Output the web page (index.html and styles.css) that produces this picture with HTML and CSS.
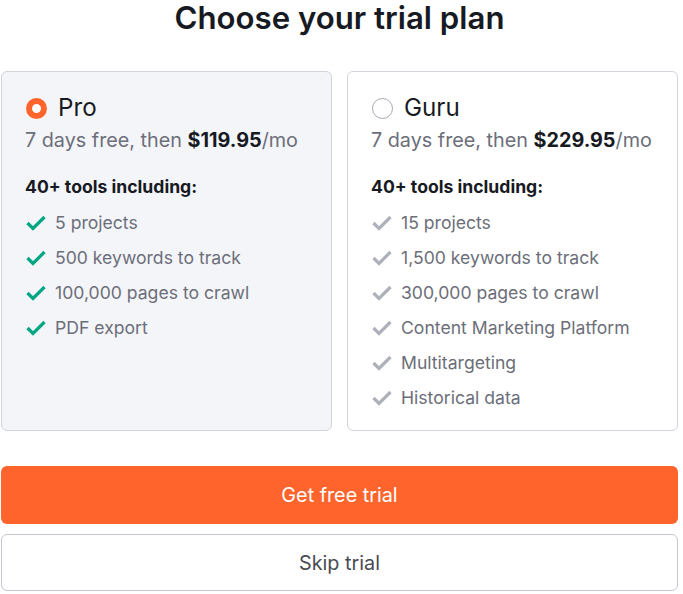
FILE: index.html
```html
<!DOCTYPE html>
<html>
<head>
<meta charset="utf-8">
<link rel="stylesheet" href="styles.css">
</head>
<body>
<div class="page">
  <h1 class="title">Choose your trial plan</h1>
  <div class="plans">
    <div class="card card-selected">
      <div class="plan-head">
        <span class="radio radio-on"></span>
        <span class="plan-name">Pro</span>
      </div>
      <div class="price">7 days free, then <b>$119.95</b>/mo</div>
      <div class="tools">40+ tools including:</div>
      <ul class="features">
        <li><svg class="check check-green" viewBox="0 0 20 20"><path d="M1.5 10 L7 15.5 L18.5 4"/></svg>5 projects</li>
        <li><svg class="check check-green" viewBox="0 0 20 20"><path d="M1.5 10 L7 15.5 L18.5 4"/></svg>500 keywords to track</li>
        <li><svg class="check check-green" viewBox="0 0 20 20"><path d="M1.5 10 L7 15.5 L18.5 4"/></svg>100,000 pages to crawl</li>
        <li><svg class="check check-green" viewBox="0 0 20 20"><path d="M1.5 10 L7 15.5 L18.5 4"/></svg>PDF export</li>
      </ul>
    </div>
    <div class="card">
      <div class="plan-head">
        <span class="radio"></span>
        <span class="plan-name">Guru</span>
      </div>
      <div class="price">7 days free, then <b>$229.95</b>/mo</div>
      <div class="tools">40+ tools including:</div>
      <ul class="features">
        <li><svg class="check check-gray" viewBox="0 0 20 20"><path d="M1.5 10 L7 15.5 L18.5 4"/></svg>15 projects</li>
        <li><svg class="check check-gray" viewBox="0 0 20 20"><path d="M1.5 10 L7 15.5 L18.5 4"/></svg>1,500 keywords to track</li>
        <li><svg class="check check-gray" viewBox="0 0 20 20"><path d="M1.5 10 L7 15.5 L18.5 4"/></svg>300,000 pages to crawl</li>
        <li><svg class="check check-gray" viewBox="0 0 20 20"><path d="M1.5 10 L7 15.5 L18.5 4"/></svg>Content Marketing Platform</li>
        <li><svg class="check check-gray" viewBox="0 0 20 20"><path d="M1.5 10 L7 15.5 L18.5 4"/></svg>Multitargeting</li>
        <li><svg class="check check-gray" viewBox="0 0 20 20"><path d="M1.5 10 L7 15.5 L18.5 4"/></svg>Historical data</li>
      </ul>
    </div>
  </div>
  <button class="btn btn-primary">Get free trial</button>
  <button class="btn btn-secondary">Skip trial</button>
</div>
</body>
</html>
```

FILE: styles.css
```css
* { box-sizing: border-box; }
html, body { margin: 0; padding: 0; background: #fff; }
body {
  font-family: Inter, "Noto Sans", sans-serif;
  color: #171a22;
}
.page {
  width: 679px;
  padding: 0 1px 0 1px;
  display: flex;
  flex-direction: column;
}
.title {
  margin: 0;
  height: 71px;
  text-align: center;
  font-size: 31.2px;
  font-weight: 600;
  line-height: 36px;
  color: #171a22;
}
.plans {
  display: flex;
  gap: 15px;
}
.card {
  flex: 1;
  height: 360px;
  border: 1px solid #d1d4db;
  border-radius: 6px;
  background: #fff;
  padding: 22px 23px 0 23px;
}
.card-selected {
  background: #f4f5f9;
}
.plan-head {
  display: flex;
  align-items: center;
  gap: 11px;
  height: 28px;
  padding-left: 1px;
}
.radio {
  width: 21px;
  height: 21px;
  border-radius: 50%;
  border: 1px solid #a3a7b0;
  background: #fff;
  flex: none;
}
.radio-on {
  border: 6px solid #ff642d;
  background: #fff;
}
.plan-name {
  font-size: 24.2px;
  font-weight: 400;
  line-height: 28px;
  color: #171a22;
}
.price {
  margin-top: 6px;
  font-size: 19.8px;
  line-height: 24px;
  color: #6c6e79;
}
.price b {
  color: #171a22;
  font-weight: 700;
}
.tools {
  margin-top: 25px;
  font-size: 17.6px;
  font-weight: 700;
  line-height: 20px;
  color: #171a22;
}
.features {
  list-style: none;
  margin: 8px 0 0 0;
  padding: 0;
}
.features li {
  display: flex;
  align-items: center;
  height: 35px;
  font-size: 17.6px;
  color: #6c6e79;
}
.check {
  width: 20px;
  height: 20px;
  margin: 0 9px 0 1px;
  flex: none;
  fill: none;
  stroke-width: 3.2;
  stroke-linecap: butt;
  stroke-linejoin: miter;
}
.check-green { stroke: #00a683; }
.check-gray { stroke: #aeb1b9; }
.btn {
  display: block;
  width: 100%;
  font-family: Inter, "Noto Sans", sans-serif;
  font-size: 19.8px;
  border-radius: 6px;
  cursor: pointer;
}
.btn-primary {
  margin-top: 35px;
  height: 58px;
  background: #ff642d;
  color: #fff;
  border: none;
}
.btn-secondary {
  margin-top: 10px;
  height: 57px;
  background: #fff;
  color: #484a54;
  border: 1px solid #c4c7cf;
}
```
